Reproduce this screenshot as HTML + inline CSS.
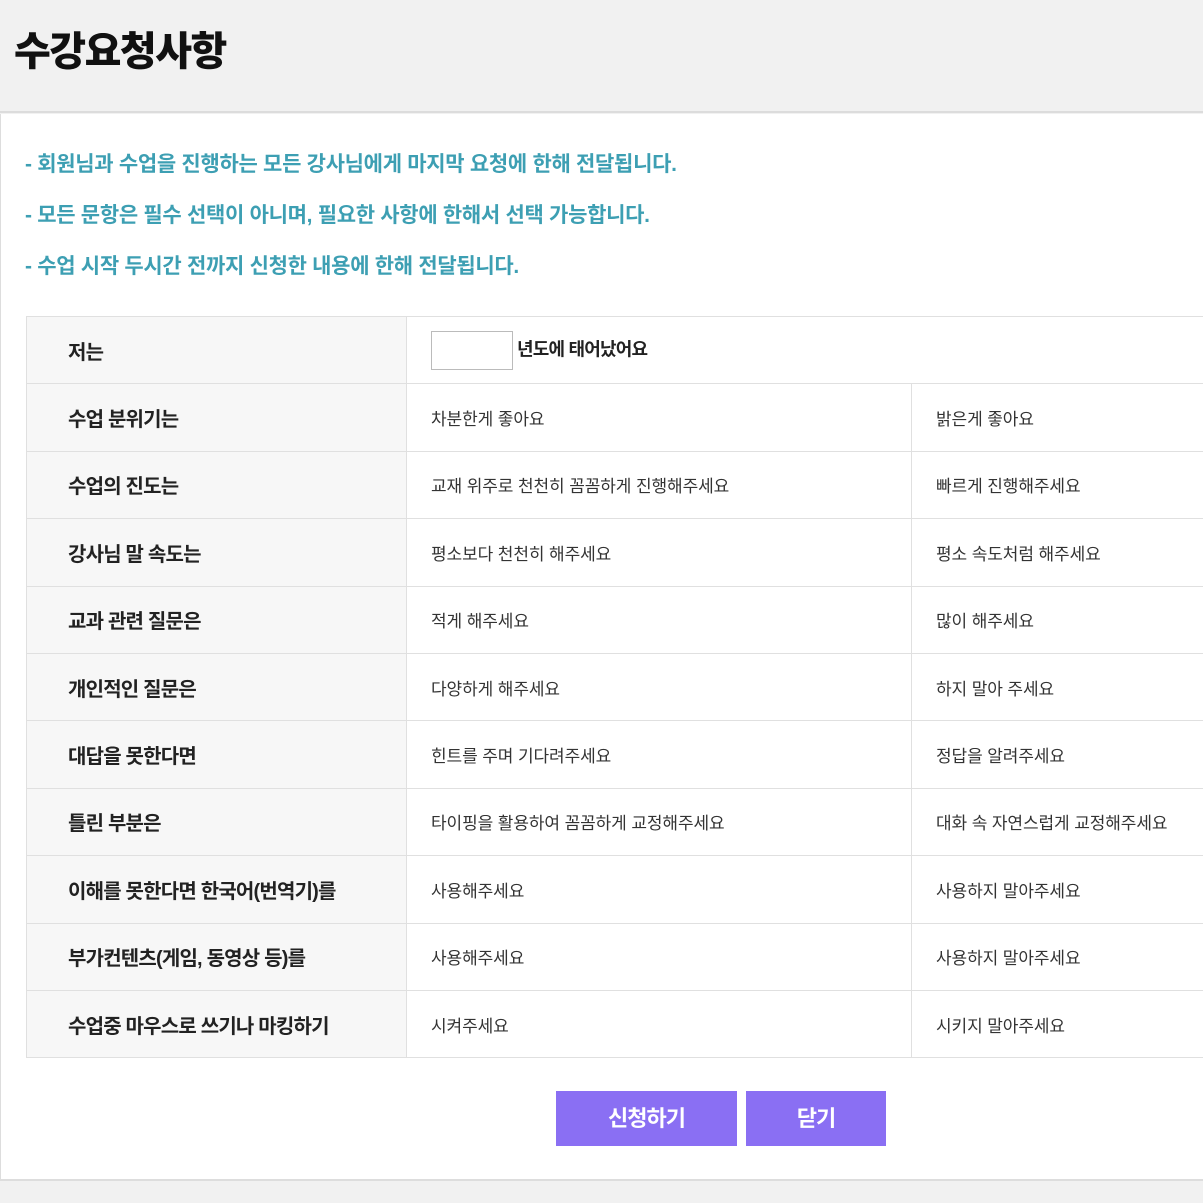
<!DOCTYPE html>
<html><head><meta charset="utf-8"><style>
*{margin:0;padding:0;box-sizing:border-box}
body{width:1203px;height:1203px;background:#f1f1f1;font-family:"Liberation Sans","Noto Sans CJK KR",sans-serif;position:relative;overflow:hidden}
.hd{position:absolute;left:0;top:0;width:1203px;height:113px;background:#f1f1f1;border-bottom:2px solid #dcdcdc}
.hd h1{position:absolute;left:14px;top:19px;font-size:40px;font-weight:900;color:#111;letter-spacing:-1.5px}
.panel{position:absolute;left:0;top:114px;width:1203px;height:1067px;background:#fff;border-left:1px solid #ddd;border-bottom:2px solid #ddd}
.note{position:absolute;left:25px;font-size:21px;font-weight:bold;color:#3d9fb3;letter-spacing:-0.3px}
table{position:absolute;left:26px;top:316px;border-collapse:collapse;width:1190px}
td{height:67.4px;border:1px solid #e0e0e0;font-size:17px;color:#333;letter-spacing:-0.1px;vertical-align:middle}
td.k{width:380px;background:#f7f7f7;padding-left:41px;font-weight:bold;color:#222;font-size:20px;letter-spacing:-0.8px}
td.a{width:505px;padding-left:24px}
td.b{padding-left:24px}
.in{display:inline-block;width:82px;height:39px;border:1px solid #bbb;vertical-align:middle;margin-right:4px}
.btn{position:absolute;top:1091px;height:55px;background:#8a6ff3;color:#fff;font-size:22px;font-weight:bold;text-align:center;line-height:55px;letter-spacing:-1px}
</style></head><body>
<div class="hd"><h1>수강요청사항</h1></div>
<div class="panel"></div>
<div class="note" style="top:148px">- 회원님과 수업을 진행하는 모든 강사님에게 마지막 요청에 한해 전달됩니다.</div>
<div class="note" style="top:199px">- 모든 문항은 필수 선택이 아니며, 필요한 사항에 한해서 선택 가능합니다.</div>
<div class="note" style="top:250px">- 수업 시작 두시간 전까지 신청한 내용에 한해 전달됩니다.</div>
<table>
<tr><td class="k">저는</td><td colspan="2" style="padding-left:24px;font-weight:bold;color:#222;font-size:18px;letter-spacing:-0.8px"><span class="in"></span>년도에 태어났어요</td></tr>
<tr><td class="k">수업 분위기는</td><td class="a">차분한게 좋아요</td><td class="b">밝은게 좋아요</td></tr>
<tr><td class="k">수업의 진도는</td><td class="a">교재 위주로 천천히 꼼꼼하게 진행해주세요</td><td class="b">빠르게 진행해주세요</td></tr>
<tr><td class="k">강사님 말 속도는</td><td class="a">평소보다 천천히 해주세요</td><td class="b">평소 속도처럼 해주세요</td></tr>
<tr><td class="k">교과 관련 질문은</td><td class="a">적게 해주세요</td><td class="b">많이 해주세요</td></tr>
<tr><td class="k">개인적인 질문은</td><td class="a">다양하게 해주세요</td><td class="b">하지 말아 주세요</td></tr>
<tr><td class="k">대답을 못한다면</td><td class="a">힌트를 주며 기다려주세요</td><td class="b">정답을 알려주세요</td></tr>
<tr><td class="k">틀린 부분은</td><td class="a">타이핑을 활용하여 꼼꼼하게 교정해주세요</td><td class="b">대화 속 자연스럽게 교정해주세요</td></tr>
<tr><td class="k">이해를 못한다면 한국어(번역기)를</td><td class="a">사용해주세요</td><td class="b">사용하지 말아주세요</td></tr>
<tr><td class="k">부가컨텐츠(게임, 동영상 등)를</td><td class="a">사용해주세요</td><td class="b">사용하지 말아주세요</td></tr>
<tr><td class="k">수업중 마우스로 쓰기나 마킹하기</td><td class="a">시켜주세요</td><td class="b">시키지 말아주세요</td></tr>
</table>
<div class="btn" style="left:556px;width:181px">신청하기</div>
<div class="btn" style="left:746px;width:140px">닫기</div>
</body></html>
